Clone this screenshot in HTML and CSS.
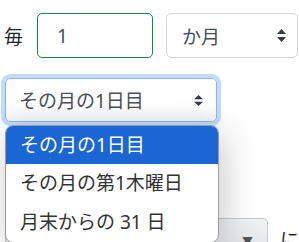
FILE: index.html
```html
<!DOCTYPE html>
<html lang="ja">
<head>
  <meta charset="UTF-8">
  <meta name="viewport" content="width=device-width, initial-scale=1.0">
  <title>繰り返し</title>
  <link rel="stylesheet" href="styles.css">
</head>
<body>
  <div class="page">
    <div class="row">
      <span class="label">毎</span>
      <div class="control number">1</div>
      <div class="control picker unit">
        <span>か月</span>
        <svg class="chev" width="9" height="13" viewBox="0 0 9 13"><path d="M4.5 0 L9 5 L0 5 Z M0 8 L9 8 L4.5 13 Z" fill="#343a40"/></svg>
      </div>
    </div>

    <!-- day-of-month select, open -->
    <div class="row open-wrap">
      <div class="control picker focused">
        <span>その月の1日目</span>
        <svg class="chev" width="9" height="11" viewBox="0 0 9 11"><path d="M4.5 0 L9 4.2 L0 4.2 Z M0 6.8 L9 6.8 L4.5 11 Z" fill="#343a40"/></svg>
      </div>
      <ul class="menu">
        <li class="selected">その月の1日目</li>
        <li>その月の第1木曜日</li>
        <li>月末からの 31 日</li>
      </ul>
    </div>

    <div class="row under">
      <div class="control ghost"><span class="tri">▼</span></div>
      <span class="suffix">に</span>
    </div>
  </div>
</body>
</html>
```

FILE: styles.css
```css
body {
  margin: 0;
  background: white;
  font-family: "Noto Sans", "Noto Sans CJK JP", sans-serif;
  font-size: 19px;
  color: #495057;
  overflow: hidden;
}

.page {
  padding: 13px 0 0 4px;
}

.row {
  display: flex;
  align-items: center;
}

.label {
  color: #212529;
  width: 33px;
}

.control {
  box-sizing: border-box;
  height: 45px;
  border: 1px solid #ced4da;
  border-radius: 5px;
  display: flex;
  align-items: center;
  background: white;
}

.number {
  width: 116px;
  border-color: #198754;
  padding-left: 19px;
}

.picker {
  justify-content: space-between;
  padding: 0 11px 0 15px;
}

.unit {
  width: 132px;
  margin-left: 13px;
}

.open-wrap {
  position: relative;
  margin-top: 20px;
  padding-left: 1px;
}

.focused {
  width: 212px;
  height: 44px;
  border-color: #86b7fe;
  box-shadow: 0 0 0 4px rgba(13, 110, 253, 0.25);
  background: linear-gradient(#ffffff 60%, #f4f5f7);
  padding-left: 13px;
  padding-right: 13px;
}

.menu {
  position: absolute;
  top: 47px;
  left: 1px;
  width: 212px;
  margin: 0;
  padding: 0;
  list-style: none;
  background: white;
  border: 1px solid #9a9a9a;
  border-radius: 8px;
  overflow: hidden;
  box-shadow: 4px 8px 36px rgba(0, 0, 0, 0.22);
  z-index: 2;
}

.menu li {
  height: 39px;
  line-height: 39px;
  padding-left: 14px;
  color: #333333;
}

.menu li.selected {
  height: 38px;
  line-height: 38px;
  background: #1a66d3;
  color: white;
}

.under {
  margin-top: 96px;
  align-items: flex-start;
}

.ghost {
  width: 265px;
  margin-left: 1px;
  background: linear-gradient(#f1f2f4, #dcdfe3);
  border-color: #c6c9cd;
  align-items: flex-start;
  justify-content: flex-end;
  padding-right: 14px;
  padding-top: 17px;
}

.tri {
  font-size: 11px;
  line-height: 11px;
  color: #555;
}

.suffix {
  color: #212529;
  margin-left: 12px;
  margin-top: 10px;
  line-height: 24px;
}
```
